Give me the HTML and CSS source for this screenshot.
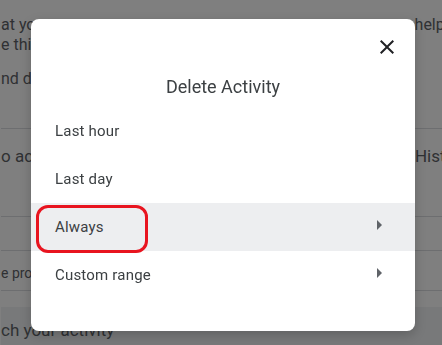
FILE: index.html
```html
<!DOCTYPE html>
<html lang="en">
<head>
    <meta charset="UTF-8">
    <title>Delete Activity</title>
    <link rel="stylesheet" href="styles.css">
</head>
<body>
    <div class="page">
        <div class="intro">
            <div class="line"><span>at you</span><span>helps</span></div>
            <div class="line"><span>e thing</span><span></span></div>
            <div class="line gap"><span>nd del</span><span></span></div>
        </div>
        <div class="section big">
            <div class="line"><span>o activ</span><span class="far">History</span></div>
        </div>
        <div class="section thin"></div>
        <div class="section small">
            <div class="line"><span>e prote</span><span></span></div>
        </div>
        <div class="search">
            <span>ch your activity</span>
        </div>
    </div>

    <div class="overlay"></div>

    <div class="dialog">
        <div class="dialog-top">
            <button class="close" aria-label="Close">
                <svg viewBox="0 0 24 24" width="24" height="24"><path d="M19 6.41L17.59 5 12 10.59 6.41 5 5 6.41 10.59 12 5 17.59 6.41 19 12 13.41 17.59 19 19 17.59 13.41 12z"/></svg>
            </button>
        </div>
        <h2 class="title">Delete Activity</h2>
        <ul class="options">
            <li class="option">Last hour</li>
            <li class="option">Last day</li>
            <li class="option active">
                <span>Always</span>
                <svg class="arrow" viewBox="0 0 24 24" width="24" height="24"><path d="M10 17l5-5-5-5v10z"/></svg>
                <span class="mark"></span>
            </li>
            <li class="option">
                <span>Custom range</span>
                <svg class="arrow" viewBox="0 0 24 24" width="24" height="24"><path d="M10 17l5-5-5-5v10z"/></svg>
            </li>
        </ul>
    </div>
</body>
</html>
```

FILE: styles.css
```css
body {
    margin: 0;
    font-family: Roboto, "Liberation Sans", Arial, sans-serif;
    background-color: #fff;
    overflow: hidden;
    height: 345px;
}
.page {
    width: 452px;
    height: 345px;
    padding-left: 1px;
    color: #5f6368;
    overflow: hidden;
}
.line {
    display: flex;
    justify-content: space-between;
    white-space: nowrap;
}
.intro {
    padding-top: 15px;
    font-size: 16px;
    line-height: 20px;
    height: 113px;
    border-bottom: 1px solid #dadce0;
}
.intro .gap {
    margin-top: 14px;
}
.section {
    border-bottom: 1px solid #dadce0;
}
.big {
    font-size: 17px;
    line-height: 24px;
    padding-top: 15px;
    height: 72px;
}
.big .far {
    margin-right: -16px;
}
.thin {
    height: 33px;
}
.small {
    font-size: 14px;
    line-height: 20px;
    padding-top: 12px;
    height: 27px;
}
.search {
    margin-top: 16px;
    background-color: #f1f3f4;
    height: 40px;
    font-size: 17px;
    line-height: 28px;
    padding-top: 9px;
    color: #5f6368;
}
.overlay {
    position: fixed;
    inset: 0;
    background: rgba(0,0,0,0.5);
}
.dialog {
    position: absolute;
    left: 31px;
    top: 19px;
    width: 384px;
    height: 312px;
    background: #fff;
    border-radius: 8px;
    box-shadow: 0 4px 12px rgba(0,0,0,0.2);
    display: flex;
    flex-direction: column;
}
.dialog-top {
    display: flex;
    justify-content: flex-end;
    padding: 16px 16px 0 0;
}
.close {
    width: 24px;
    height: 24px;
    padding: 0;
    border: none;
    background: none;
    fill: #202124;
}
.close svg {
    display: block;
}
.title {
    margin: 16px 0 0;
    text-align: center;
    font-size: 18px;
    line-height: 24px;
    font-weight: 400;
    color: #3c4043;
}
.options {
    list-style: none;
    margin: 8px 0 0;
    padding: 0;
}
.option {
    position: relative;
    height: 48px;
    display: flex;
    align-items: center;
    justify-content: space-between;
    padding: 0 24px;
    font-size: 15px;
    letter-spacing: 0.2px;
    color: #3c4043;
}
.option.active {
    background-color: #edeef0;
}
.arrow {
    fill: #5f6368;
    margin-bottom: 4px;
}
.mark {
    position: absolute;
    left: 5px;
    top: 2px;
    width: 112px;
    height: 48px;
    box-sizing: border-box;
    border: 3px solid #e8141f;
    border-radius: 12px;
}
```
